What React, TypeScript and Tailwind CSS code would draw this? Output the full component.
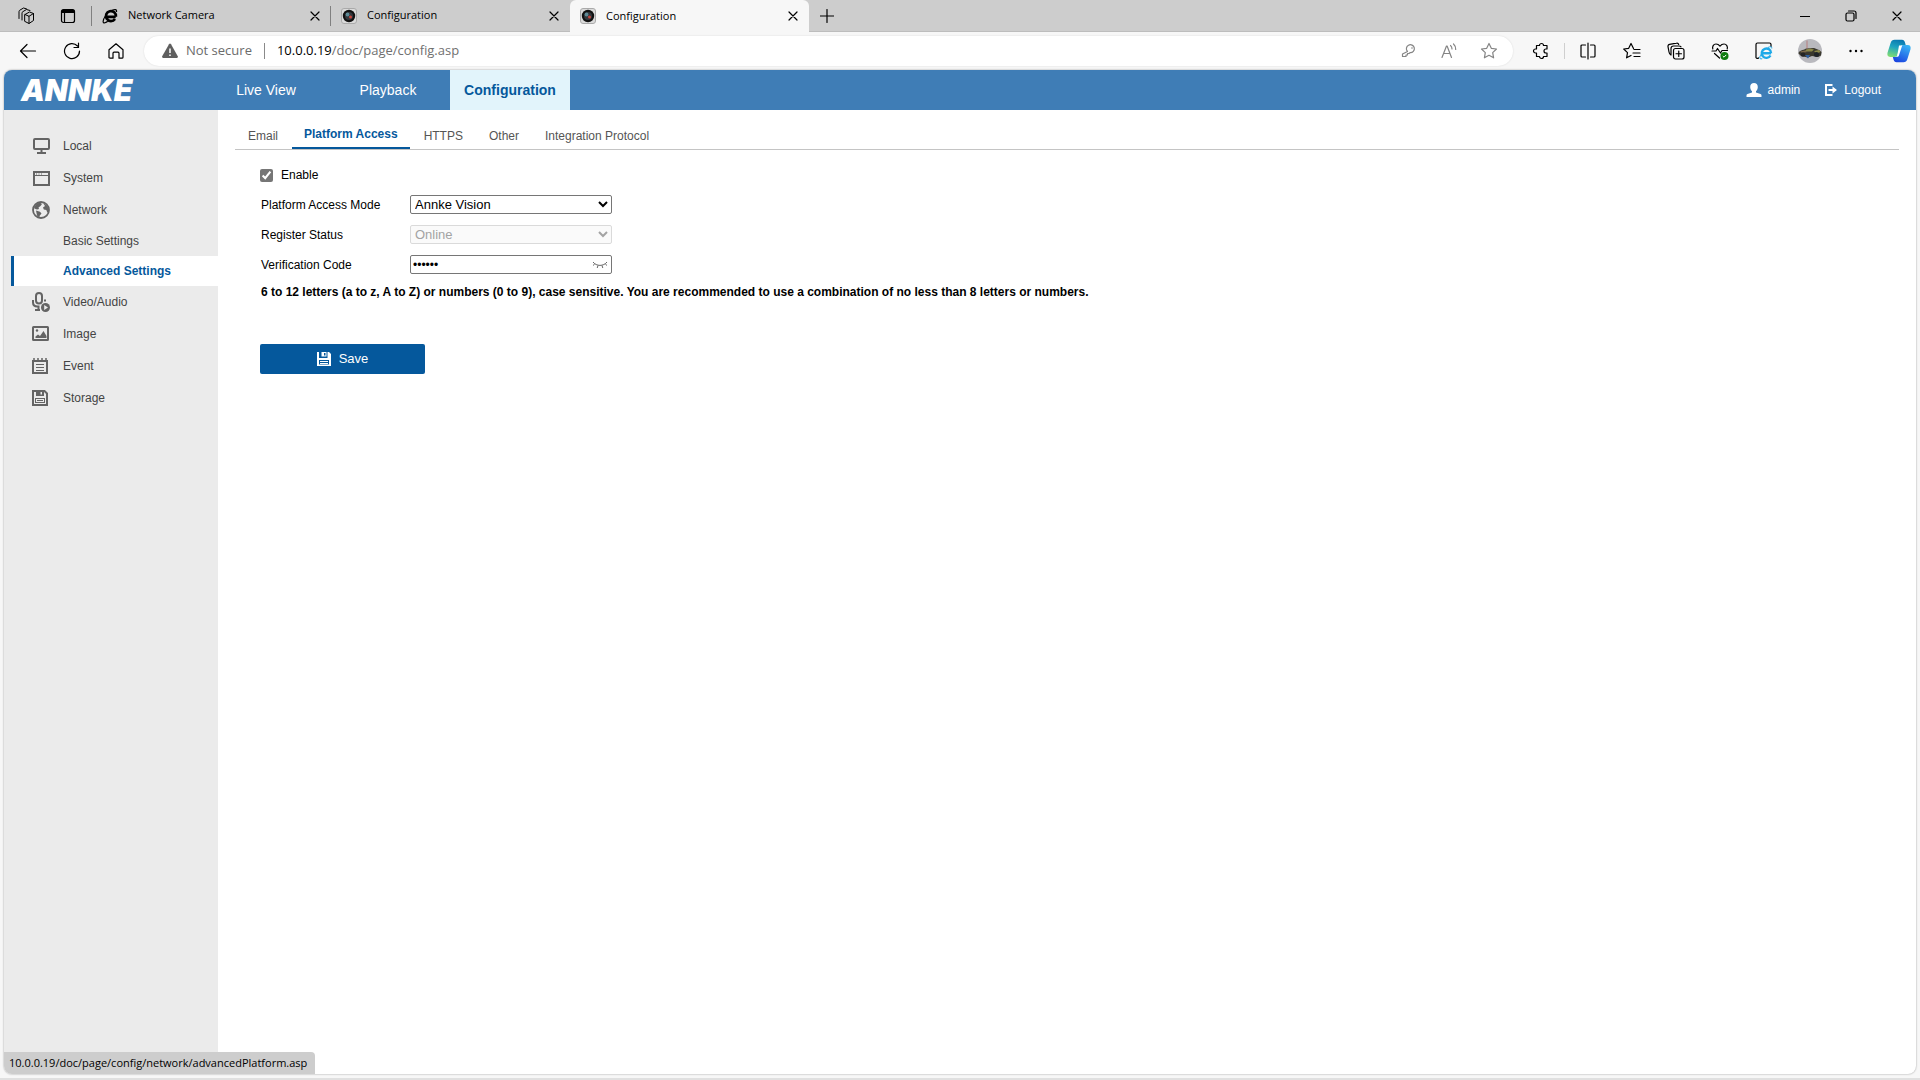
import { useState, type ReactNode } from "react";

const stroke = { fill: "none", stroke: "currentColor", strokeWidth: 1.2, strokeLinecap: "round", strokeLinejoin: "round" } as const;

function Svg({ size = 16, children }: { size?: number; children: ReactNode }) {
  return (
    <svg width={size} height={size} viewBox={`0 0 ${size} ${size}`} className="shrink-0" aria-hidden="true">
      {children}
    </svg>
  );
}

function CloseIcon() {
  return (
    <Svg size={10}>
      <path d="M1 1l8 8M9 1l-8 8" {...stroke} />
    </Svg>
  );
}

function WorkspacesIcon() {
  return (
    <Svg size={18}>
      <path d="M8 7.500 12.500 5l4 1.500v7L12 16.500l-4-2zM8 7.500l4 1.800v7M12 9.300l4.500-2.800" {...stroke} strokeWidth={1} />
      <path d="M5 13V6.200C5 5.500 5.200 5 5.800 4.700L9.500 2.500l3.500 1M2 11.500V4.700C2 4 2.200 3.500 2.800 3.200L6.500 1l3 .9" {...stroke} strokeWidth={1} />
    </Svg>
  );
}

function TabActionsIcon() {
  return (
    <Svg size={16}>
      <rect x="1.500" y="1.500" width="13" height="13" rx="2" {...stroke} />
      <path d="M1.500 3.500a2 2 0 0 1 2-2h9a2 2 0 0 1 2 2V5h-13z" fill="currentColor" />
      <path d="M4.500 5v9.500" {...stroke} />
    </Svg>
  );
}

function ExplorerFavicon() {
  return (
    <Svg size={16}>
      <path d="M4.500 8.800h9.200M13 11a5 5 0 1 1 .9-2.300" fill="none" stroke="#000" strokeWidth="2.700" />
      <path d="M14.500 4c.6-3-2-2.800-4.500-1.600M3.500 8C.2 12.500.6 15.600 3 14.800c1-.3 2-.9 2.800-1.500" fill="none" stroke="#000" strokeWidth="1.200" />
    </Svg>
  );
}

function CameraFavicon() {
  return (
    <Svg size={16}>
      <rect x=".5" y=".5" width="15" height="15" rx="2.500" fill="#dadada" stroke="#aaa" />
      <circle cx="8" cy="8" r="6.200" fill="#111" />
      <circle cx="8" cy="8" r="4" fill="#33383d" />
      <circle cx="6.500" cy="6.500" r="1.900" fill="#5e8a96" />
      <circle cx="9.500" cy="9" r="1.500" fill="#c8453c" />
    </Svg>
  );
}

function BackIcon() {
  return (
    <Svg size={18}>
      <path d="M16.500 9H1.500M8 2.500 1.500 9 8 15.500" {...stroke} />
    </Svg>
  );
}

function RefreshIcon() {
  return (
    <Svg size={18}>
      <path d="M16.500 9A7.500 7.500 0 1 1 14.500 4M15.500 1v4.500H11" {...stroke} />
    </Svg>
  );
}

function HomeIcon() {
  return (
    <Svg size={18}>
      <path d="M2 7.700 9 1.800l7 5.900v7.500c0 .6-.4 1-1 1h-3v-5c0-.6-.4-1-1-1H7c-.6 0-1 .4-1 1v5H3c-.6 0-1-.4-1-1z" {...stroke} />
    </Svg>
  );
}

function WarningIcon() {
  return (
    <Svg size={16}>
      <path d="M7 1.200a1.200 1.200 0 0 1 2 0l6.800 12.100c.4.800-.1 1.700-1 1.700H1.200c-.9 0-1.400-.9-1-1.700z" fill="#5f5f5f" />
      <path d="M8 5.500v4.500M8 11.500v1.500" stroke="#fff" strokeWidth="1.500" />
    </Svg>
  );
}

function KeyIcon() {
  return (
    <Svg size={16}>
      <path d="M6.500 8.500A4 4 0 1 1 9 9.700l-1 .8H6.500V12H5v1.500H1.500v-2.500z" {...stroke} />
      <circle cx="11" cy="5" r=".8" fill="currentColor" />
    </Svg>
  );
}

function ReadAloudIcon() {
  return (
    <Svg size={18}>
      <path d="M2 15.500 6.500 4h.6l4.400 11.500M3.500 11.500H10M10.500 3.500c1 .8 1.500 2 1.500 3.500M13.500 2c1.600 1.400 2.300 3.200 2.200 5.500" {...stroke} />
    </Svg>
  );
}

function StarIcon() {
  return (
    <Svg size={18}>
      <path d="m9 1.500 2.300 4.800 5.200.7-3.800 3.600.9 5.200L9 13.300l-4.600 2.500.9-5.200L1.500 7l5.200-.7z" {...stroke} />
    </Svg>
  );
}

function PuzzleIcon() {
  return (
    <Svg size={18}>
      <path d="M4.500 3.500h3a2 2 0 0 1 4 0h3.500v3.500h-1a2 2 0 0 0 0 4h1v3.500h-3.500a2 2 0 0 1-4 0h-3V11H3.500a2 2 0 0 1 0-4h1z" {...stroke} />
    </Svg>
  );
}

function SplitIcon() {
  return (
    <Svg size={18}>
      <path d="M6.500 3H3a1 1 0 0 0-1 1v10a1 1 0 0 0 1 1h3.500M11.500 3H15a1 1 0 0 1 1 1v10a1 1 0 0 1-1 1h-3.500M9 1v16" {...stroke} />
    </Svg>
  );
}

function FavoritesIcon() {
  return (
    <Svg size={18}>
      <path d="M10.500 6.500 8 1.500 5.700 6.300l-5 .7 3.800 3.600-.9 5.200L8 13.500M11 7.500h6M10 11h7M11 14.500h6" {...stroke} />
    </Svg>
  );
}

function CollectionsIcon() {
  return (
    <Svg size={18}>
      <rect x="6.500" y="6.500" width="10.500" height="10.500" rx="2" {...stroke} />
      <path d="M11.750 9v5.500M9 11.750h5.500M4 13C2.800 12.200 2.200 11.300 2 10L1 4.600c-.2-1.100.5-2.100 1.600-2.300l6.900-1.200c1-.2 1.900.4 2.200 1.400M4 13V6.500C4 5 5 4 6.500 4H12c1 0 1.600.3 2 .8" {...stroke} />
    </Svg>
  );
}

function HealthIcon() {
  return (
    <Svg size={18}>
      <path d="M1.800 7C1 4.500 2.500 2 5 2c1.700 0 3 .9 4 2.200C10 2.900 11.300 2 13 2c2.500 0 4 2.500 3.200 5M1 9h4l1.500-2.500L9.500 11 11 8.500h5.500M3.500 11.500 8.500 16" {...stroke} />
      <circle cx="13.500" cy="14" r="4" fill="#107c10" />
      <path d="m11.800 14 1.200 1.200 2.200-2.300" fill="none" stroke="#fff" />
    </Svg>
  );
}

function ExplorerModeIcon() {
  return (
    <Svg size={18}>
      <path d="M3.500 16A1.500 1.500 0 0 1 1 14.500V2.500A1.500 1.500 0 0 1 2.500 1h12A1.500 1.500 0 0 1 16 2.500v2" {...stroke} />
      <path d="M7 11.200h9M15.500 13.500a4.700 4.700 0 1 1 .6-2.300" fill="none" stroke="#1ea9e8" strokeWidth="2.400" />
      <path d="M16.800 6.500c.5-2-1.500-2.200-4-1M6 12.500c-2 3-1.500 5.200 1.300 4.200" fill="none" stroke="#1ea9e8" strokeWidth="1" />
    </Svg>
  );
}

function AvatarIcon() {
  return (
    <Svg size={24}>
      <circle cx="12" cy="12" r="12" fill="#b9b9be" />
      <path d="M.5 14.500C1 11 5 11.500 8 9.500l8-.5 5 2 2.500 2-.5 3.500-3 1.500-6-1-4 1.500-7-1.500z" fill="#3a382e" />
      <path d="m8 10.500 4-1 4 1-2 2H7zM16 12l5-1 1.500 2-4 1.500z" fill="#8b8748" />
      <path d="M2 12.500l5-1 2 1.500-5 1z" fill="#7d6a4a" />
      <circle cx="5" cy="15.500" r="2.300" fill="#242424" />
      <circle cx="18.500" cy="15.500" r="2.500" fill="#20242a" />
      <path d="M7 16l3 3.500 2-3.500z" fill="#2f5f9e" />
      <path d="M9 1.500v8" stroke="#b56464" strokeWidth=".7" />
    </Svg>
  );
}

function CopilotIcon() {
  return (
    <Svg size={24}>
      <defs>
        <linearGradient id="cpA" x1="0.6" y1="0" x2="0.300" y2="1">
          <stop offset="0" stopColor="#0a78b0" />
          <stop offset=".45" stopColor="#1fa5c0" />
          <stop offset="1" stopColor="#7fdc73" />
        </linearGradient>
        <linearGradient id="cpB" x1="0.8" y1="0" x2="0.300" y2="1">
          <stop offset="0" stopColor="#39b5f5" />
          <stop offset="1" stopColor="#1b45e0" />
        </linearGradient>
      </defs>
      <path d="M16.500 23.200h-7c-1.700 0-2.400-1-2.900-2.500L5.800 18H8c1.600 0 2.600-.8 3.100-2.300l2.400-7.500c.5-1.400 1.300-2.200 3-2.200h4.300c2.500 0 3.200 2 2.700 4.200L20.400 20c-.7 2.200-1.900 3.200-3.900 3.200z" fill="url(#cpB)" />
      <path d="M7.500.8h7.500c1.700 0 2.400 1 2.900 2.500l.8 2.700H16c-1.600 0-2.600.8-3.100 2.300l-2.400 7.500c-.5 1.400-1.300 2.200-3 2.200H3.200C.7 18 0 16 .5 13.800L3.600 4C4.300 1.800 5.500.8 7.500.8z" fill="url(#cpA)" />
      <path d="M12 6.500h3.200L12 16.200c-.3 1-.9 1.600-2 1.800z" fill="#fff" />
    </Svg>
  );
}

function MonitorIcon() {
  return (
    <Svg size={18}>
      <rect x="2" y="2" width="15" height="10" rx="1" fill="none" stroke="currentColor" strokeWidth="2" />
      <path d="M8.500 13h2v2h3.500v2H5v-2h3.500z" fill="currentColor" />
    </Svg>
  );
}

function WindowIcon() {
  return (
    <Svg size={18}>
      <path d="M1 2h17v15H1zM3 7v8h13V7zM3 4v2h13V4z" fill="currentColor" fillRule="evenodd" />
      <path d="M4 5h1M6.500 5h1M9 5h1" stroke="currentColor" />
    </Svg>
  );
}

function GlobeIcon() {
  return (
    <Svg size={18}>
      <circle cx="9" cy="9" r="8" fill="none" stroke="currentColor" strokeWidth="1.800" />
      <path d="M2 7c1-3 3-5 6-5.500L10 3 8.500 5 6.500 6.500 7 8 5 8.500 3.500 8zM4 9.500l4 1.200 1.500 1.800L7.500 15v2L5 14.500zM11 2l4 2.500 2 4-1.500 3.500-1.200-3-2.500-.5-.8-2L13 5z" fill="currentColor" />
    </Svg>
  );
}

function MicIcon() {
  return (
    <Svg size={20}>
      <rect x="4" y="1" width="6" height="10.500" rx="3" fill="none" stroke="currentColor" strokeWidth="2" />
      <path d="M1 8v2.500C1 13 3 14.500 5.500 14.500H7.500M6.500 15v3M3 18h5" fill="none" stroke="currentColor" strokeWidth="2" />
      <path d="M13 7.500v2" stroke="currentColor" strokeWidth="2" />
      <circle cx="13.500" cy="15.500" r="4.500" fill="currentColor" />
      <path d="m12.200 13 3.800 2.500-3.800 2.500z" fill="#ebebeb" />
    </Svg>
  );
}

function PictureIcon() {
  return (
    <Svg size={18}>
      <rect x="1" y="2" width="15" height="13" rx=".5" fill="none" stroke="currentColor" strokeWidth="2" />
      <path d="M3.500 13v-1.500L6 9.500l2 1.500 3.500-5 3 5v2z" fill="currentColor" />
      <circle cx="5" cy="5.500" r="1.200" fill="currentColor" />
    </Svg>
  );
}

function EventIcon() {
  return (
    <Svg size={18}>
      <path d="M0 3h16v14H0zM2 5v10h12V5z" fill="currentColor" fillRule="evenodd" />
      <path d="M2 1v3M6 1v3M10 1v3M14 1v3" stroke="currentColor" strokeWidth="1.500" />
      <path d="M4 7.500h8M4 10.500h8M4 13.500h8" stroke="currentColor" />
    </Svg>
  );
}

function FloppyIcon() {
  return (
    <Svg size={18}>
      <path d="M1 2h11.500L15 4.500V16H1z" fill="none" stroke="currentColor" strokeWidth="2" />
      <path d="M4 2h8v5H4zM8.500 3v2.500H10V3z" fill="currentColor" fillRule="evenodd" />
      <path d="M3 9.500h10M3 13.500h10M3.500 9v5M12.500 9v5M5 11.500h6" stroke="currentColor" />
    </Svg>
  );
}

function SaveIcon() {
  return (
    <Svg size={14}>
      <path d="M0 0h2v6h8.500V0H12l2 2v12H0zM2 8v4.500h10V8z" fill="#fff" fillRule="evenodd" />
      <path d="M4.500 0h5v4.500h-5zM7 1v2.500h1.500V1z" fill="#fff" fillRule="evenodd" />
      <path d="M3 9.500h8M3 11.500h8" stroke="#fff" />
    </Svg>
  );
}

function UserIcon() {
  return (
    <Svg size={16}>
      <path d="M8 1c2.300 0 3.800 1.600 3.800 4 0 1.800-.8 3.300-1.800 4.200v1.300l4.500 1.500c.7.300 1 .8 1 1.500v1.500H.5v-1.500c0-.7.3-1.200 1-1.500L6 10.500V9.200C5 8.300 4.200 6.800 4.200 5c0-2.400 1.500-4 3.800-4z" fill="#fff" />
    </Svg>
  );
}

function LogoutIcon() {
  return (
    <Svg size={14}>
      <path d="M8.500 2H2v10h6.500" fill="none" stroke="#fff" strokeWidth="2" />
      <path d="M4.500 6h4V3.500L13 7l-4.500 3.500V8h-4z" fill="#fff" />
    </Svg>
  );
}

function ClosedEyeIcon() {
  return (
    <Svg size={16}>
      <path d="M1 5c3.500 4.500 10.500 4.500 14 0M2.800 6.800 1 8.500M6 8.500 5.200 11M10 8.500l.8 2.500M13.200 6.800 15 8.500" fill="none" stroke="#666" />
    </Svg>
  );
}

function BrowserTab({ title, icon, divider = false }: { title: string; icon: ReactNode; divider?: boolean }) {
  return (
    <div className="relative flex w-[239px] min-w-0 items-center pr-[11px] pl-2.5">
      {icon}
      <span className="ml-2.5 flex-1 truncate text-[11px]">{title}</span>
      <button aria-label={`Close ${title}`}>
        <CloseIcon />
      </button>
      {divider && <span className="absolute top-1.5 right-0 h-5 w-px bg-[#808080]" />}
    </div>
  );
}

function ToolButton({ label, children }: { label: string; children: ReactNode }) {
  return (
    <button aria-label={label} className="flex h-8 w-11 shrink-0 items-center justify-center">
      {children}
    </button>
  );
}

function PillButton({ label, children }: { label: string; children: ReactNode }) {
  return (
    <button aria-label={label} className="flex h-7 w-10 shrink-0 items-center justify-center text-[#858585]">
      {children}
    </button>
  );
}

function BrowserChrome() {
  return (
    <div className="font-['Open_Sans','Noto_Sans',sans-serif] text-black">
      <div className="flex h-8 border-b border-[#bdbdbd] bg-[#cdcdcd]">
        <div className="flex w-[92px] shrink-0 items-center pl-[17px]">
          <button aria-label="Workspaces">
            <WorkspacesIcon />
          </button>
          <button aria-label="Tab actions" className="ml-[25px]">
            <TabActionsIcon />
          </button>
          <span className="ml-auto h-5 w-px shrink-0 bg-[#808080]" />
        </div>
        <BrowserTab title="Network Camera" icon={<ExplorerFavicon />} divider />
        <BrowserTab title="Configuration" icon={<CameraFavicon />} />
        <div className="-mb-px flex rounded-t-md bg-[#f7f7f7]">
          <BrowserTab title="Configuration" icon={<CameraFavicon />} />
        </div>
        <button aria-label="New tab" className="flex w-9 items-center justify-center">
          <Svg size={14}>
            <path d="M7 .5v13M.5 7h13" {...stroke} />
          </Svg>
        </button>
        <div className="ml-auto flex">
          <button aria-label="Minimize" className="flex w-[46px] items-center justify-center">
            <Svg size={10}>
              <path d="M0 5.500h10" stroke="#000" />
            </Svg>
          </button>
          <button aria-label="Restore" className="flex w-[46px] items-center justify-center">
            <Svg size={12}>
              <rect x="1" y="3" width="8" height="8" rx="1.500" {...stroke} />
              <path d="M3.500 1H9a2 2 0 0 1 2 2v5.500" {...stroke} />
            </Svg>
          </button>
          <button aria-label="Close window" className="flex w-[46px] items-center justify-center">
            <CloseIcon />
          </button>
        </div>
      </div>
      <div className="flex h-[38px] items-center bg-[#f7f7f7] pl-1.5">
        <ToolButton label="Back"><BackIcon /></ToolButton>
        <ToolButton label="Refresh"><RefreshIcon /></ToolButton>
        <ToolButton label="Home"><HomeIcon /></ToolButton>
        <div className="mx-1.5 flex h-[30px] min-w-0 flex-1 items-center rounded-full bg-white pr-1 pl-[18px] text-[13px] shadow-[0_0_2px_rgba(0,0,0,0.12)]">
          <WarningIcon />
          <span className="ml-2 shrink-0 text-[#6b6b6b]">Not secure</span>
          <span className="mx-3 h-4 w-px shrink-0 bg-[#8a8a8a]" />
          <span className="min-w-0 flex-1 truncate text-[#707070]">
            <span className="text-black">10.0.0.19</span>/doc/page/config.asp
          </span>
          <PillButton label="Saved passwords"><KeyIcon /></PillButton>
          <PillButton label="Read aloud"><ReadAloudIcon /></PillButton>
          <PillButton label="Add to favorites"><StarIcon /></PillButton>
        </div>
        <ToolButton label="Extensions"><PuzzleIcon /></ToolButton>
        <span className="mx-px h-4 w-px bg-[#cfcfcf]" />
        <ToolButton label="Split screen"><SplitIcon /></ToolButton>
        <ToolButton label="Favorites"><FavoritesIcon /></ToolButton>
        <ToolButton label="Collections"><CollectionsIcon /></ToolButton>
        <ToolButton label="Browser essentials"><HealthIcon /></ToolButton>
        <ToolButton label="Internet Explorer mode"><ExplorerModeIcon /></ToolButton>
        <button aria-label="Profile" className="flex h-8 w-12 shrink-0 items-center justify-center"><AvatarIcon /></button>
        <ToolButton label="Settings and more">
          <Svg size={14}>
            <circle cx="1.500" cy="7" r="1.200" />
            <circle cx="7" cy="7" r="1.200" />
            <circle cx="12.500" cy="7" r="1.200" />
          </Svg>
        </ToolButton>
        <button aria-label="Copilot" className="flex h-8 w-[42px] shrink-0 items-center justify-center"><CopilotIcon /></button>
      </div>
    </div>
  );
}

function AppHeader() {
  return (
    <header className="flex h-10 items-stretch bg-[#3f7db6] text-white">
      <div className="flex w-[202px] shrink-0 items-center pl-[17px] font-['Inter',sans-serif] text-[30px] leading-none font-black italic">
        ANNKE
      </div>
      <nav className="flex gap-0.5 text-sm">
        <a href="#live" className="flex w-[120px] items-center justify-center">Live View</a>
        <a href="#playback" className="flex w-[120px] items-center justify-center">Playback</a>
        <a href="#config" className="flex w-[120px] items-center justify-center bg-[#e2f4fb] font-bold text-[#05589c]">Configuration</a>
      </nav>
      <div className="ml-auto flex items-center pr-[35px] text-xs">
        <UserIcon />
        <span className="ml-1.5">admin</span>
        <a href="#logout" className="ml-6 flex items-center gap-1.5">
          <LogoutIcon />
          Logout
        </a>
      </div>
    </header>
  );
}

function MenuItem({ label, icon }: { label: string; icon: ReactNode }) {
  return (
    <a href={`#${label}`} className="flex h-8 items-center pl-7">
      <span className="flex w-[31px] items-center text-[#646464]">{icon}</span>
      {label}
    </a>
  );
}

function Sidebar() {
  return (
    <aside className="w-[214px] shrink-0 bg-[#ebebeb] pt-5 text-xs text-[#444]">
      <MenuItem label="Local" icon={<MonitorIcon />} />
      <MenuItem label="System" icon={<WindowIcon />} />
      <MenuItem label="Network" icon={<GlobeIcon />} />
      <a href="#basic" className="flex h-[30px] items-center pl-[59px]">Basic Settings</a>
      <a href="#advanced" className="ml-[7px] flex h-[30px] items-center border-l-3 border-[#05589c] bg-white pl-[49px] font-bold text-[#05589c]">
        Advanced Settings
      </a>
      <MenuItem label="Video/Audio" icon={<MicIcon />} />
      <MenuItem label="Image" icon={<PictureIcon />} />
      <MenuItem label="Event" icon={<EventIcon />} />
      <MenuItem label="Storage" icon={<FloppyIcon />} />
    </aside>
  );
}

function SubTab({ label }: { label: string }) {
  return (
    <a href={`#${label}`} className="flex h-[26px] items-center px-[13px]">
      {label}
    </a>
  );
}

function SettingsForm() {
  const [enabled, setEnabled] = useState(true);
  const [code, setCode] = useState("abc123");
  return (
    <form className="pt-2.5 pl-[25px] text-xs text-black" onSubmit={(e) => e.preventDefault()}>
      <label className="flex h-[30px] items-center gap-2">
        <input type="checkbox" checked={enabled} onChange={(e) => setEnabled(e.target.checked)} className="size-[13px] accent-[#767676]" />
        Enable
      </label>
      <div className="flex h-[30px] items-center pb-px pl-px">
        <label htmlFor="mode" className="w-[149px]">Platform Access Mode</label>
        <select id="mode" className="h-[19px] w-[202px] rounded-xs border border-[#767676] bg-white text-[13px] leading-4">
          <option>Annke Vision</option>
        </select>
      </div>
      <div className="flex h-[30px] items-center pb-px pl-px">
        <label htmlFor="status" className="w-[149px]">Register Status</label>
        <select id="status" disabled className="h-[19px] w-[202px] rounded-xs border border-[#dadada] bg-[#fafafa] text-[13px] leading-4 text-[#a3a3a3] opacity-100">
          <option>Online</option>
        </select>
      </div>
      <div className="flex h-[30px] items-center pb-px pl-px">
        <label htmlFor="code" className="w-[149px]">Verification Code</label>
        <div className="relative w-[202px]">
          <input
            id="code"
            type="password"
            value={code}
            onChange={(e) => setCode(e.target.value)}
            className="block h-[19px] w-full rounded-xs border border-[#767676] bg-white pr-6 pl-0.5 text-xs"
          />
          <button type="button" aria-label="Show code" className="absolute top-0.5 right-1">
            <ClosedEyeIcon />
          </button>
        </div>
      </div>
      <p className="pt-1 pl-px font-bold">
        6 to 12 letters (a to z, A to Z) or numbers (0 to 9), case sensitive. You are recommended to use a combination of no less than 8 letters or numbers.
      </p>
      <button type="submit" className="mt-11 flex h-[30px] w-[165px] items-center justify-center gap-2 rounded-xs bg-[#05589c] text-[13px] text-white">
        <SaveIcon />
        Save
      </button>
    </form>
  );
}

export default function App() {
  return (
    <div className="flex min-h-screen flex-col bg-[#f7f7f7]">
      <BrowserChrome />
      <div className="relative mx-1 flex flex-1 flex-col overflow-hidden rounded-lg bg-white font-['Liberation_Sans',Arial,sans-serif] shadow-[0_0_2px_rgba(0,0,0,0.4)]">
        <AppHeader />
        <div className="flex flex-1">
          <Sidebar />
          <main className="min-w-0 flex-1 px-[17px]">
            <nav className="flex h-10 items-end border-b border-[#c4c4c4] text-xs text-[#555]">
              <SubTab label="Email" />
              <a href="#platform" className="mx-px flex h-7 items-center border-b-2 border-[#05589c] px-3 font-bold text-[#05589c]">
                Platform Access
              </a>
              <SubTab label="HTTPS" />
              <SubTab label="Other" />
              <SubTab label="Integration Protocol" />
            </nav>
            <SettingsForm />
          </main>
        </div>
        <div className="absolute bottom-0 left-0 flex h-[22px] items-center rounded-tr-sm bg-[#cdcdcd] pr-2 pl-[5px] font-['Open_Sans','Noto_Sans',sans-serif] text-[11px] text-black">
          10.0.0.19/doc/page/config/network/advancedPlatform.asp
        </div>
      </div>
      <div className="mt-1 h-0.5 bg-[#e0e0e0]" />
    </div>
  );
}
